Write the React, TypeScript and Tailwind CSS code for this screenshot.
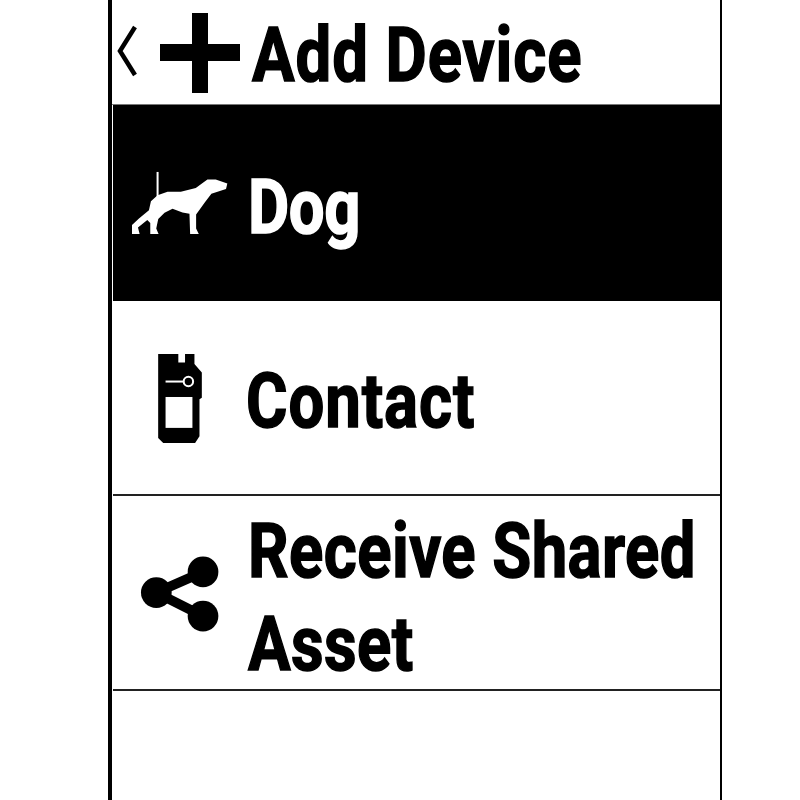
export default function App() {
  const label = "inline-block origin-left scale-x-[0.835] whitespace-nowrap font-bold text-[76px] leading-[93px] [-webkit-text-stroke:1.5px_currentColor]";
  return (
    <div className="w-[800px] h-[800px] bg-white overflow-hidden pl-[108px] font-['Roboto','Liberation_Sans',sans-serif] text-black">
      <div className="w-[614px] h-[800px] border-l-[4px] border-r-2 border-black flex flex-col pl-px">
        <div className="h-[105px] shrink-0 flex items-center border-b border-[#777] -ml-px">
          <svg viewBox="0 0 24 56" className="w-6 h-14 ml-[4px] mt-[2px] shrink-0">
            <path d="M19 2 L4 26 L19 50" fill="none" stroke="#000" strokeWidth="4.5" />
          </svg>
          <svg viewBox="0 0 80 80" className="w-20 h-20 ml-[20px] mt-px shrink-0">
            <path d="M32 0h16v31h32v17H48v32H32V48H0V31h32z" fill="#000" />
          </svg>
          <span className={label + " ml-[12px] mt-[6px] tracking-[1.1px]"}>Add Device</span>
        </div>

        <div className="h-[196px] shrink-0 flex items-center bg-black text-white">
          <div className="w-[133px] shrink-0 flex justify-center">
            <svg viewBox="90 505 295 200" className="w-[98px] h-[67px]">
              <rect x="167" y="510" width="6" height="75" fill="#fff" />
              <path d="M380 545L345 533H320L285 558L240 570H200L170 580L150 598L144 625L114 650L93 670V697H116L111 677L139 655L148 664V697H173L166 680L172 652L191 633L215 621L245 632L266 636L268 697H294L286 680V638L312 602L332 576L376 561Z" fill="#fff" />
            </svg>
          </div>
          <span className={label + " mt-[8px] ml-[2px] -tracking-[0.5px]"}>Dog</span>
        </div>

        <div className="h-[195px] shrink-0 flex items-center border-b-2 border-[#222]">
          <div className="w-[133px] shrink-0 flex justify-center">
            <svg viewBox="175 75 130 265" className="w-[44px] h-[89px] mt-[2px]">
              <path d="M175 75H235V100H255V75H283V105L305 130V205L298 210V320L285 340H190L175 325Z" fill="#000" />
              <rect x="197" y="203" width="80" height="92" fill="#fff" />
              <rect x="197" y="154" width="55" height="6" fill="#fff" />
              <circle cx="265" cy="157" r="14" fill="#000" stroke="#fff" strokeWidth="6" />
            </svg>
          </div>
          <span className={label + " mt-[8px] tracking-[1.1px]"}>Contact</span>
        </div>

        <div className="h-[195px] shrink-0 flex items-center border-b-2 border-[#222]">
          <div className="w-[133px] shrink-0 flex justify-center">
            <svg viewBox="115 680 245 235" className="w-[80px] h-[78px] mt-[2px]">
              <path d="M165 793L308 730M165 793L308 865" fill="none" stroke="#000" strokeWidth="30" />
              <circle cx="165" cy="793" r="47" fill="#000" />
              <circle cx="308" cy="730" r="47" fill="#000" />
              <circle cx="308" cy="865" r="47" fill="#000" />
            </svg>
          </div>
          <span className={label + " mt-[10px] ml-[2px] tracking-[0.5px]"}>Receive Shared<br />Asset</span>
        </div>
      </div>
    </div>
  );
}
